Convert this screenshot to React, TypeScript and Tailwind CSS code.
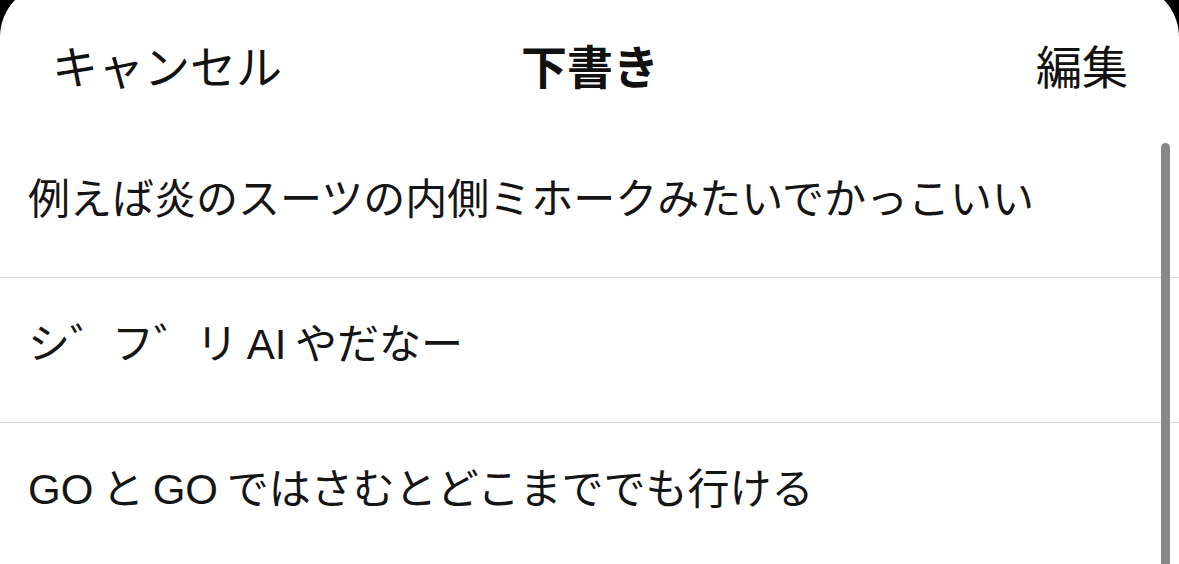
const DRAFTS = [
  "例えば炎のスーツの内側ミホークみたいでかっこいい",
  "シ゛フ゛リ AI やだなー",
  "GO と GO ではさむとどこまででも行ける",
];

const FONT = "font-['Liberation_Sans','Noto_Sans_CJK_JP',sans-serif]";

export default function App() {
  return (
    <div className={`w-[1179px] h-[564px] overflow-hidden bg-black ${FONT}`}>
      <div className="relative -mt-4 h-[580px] bg-white rounded-t-[53px] pt-4">
        <header className="h-[133px] flex items-center pl-[52px] pr-[51px] pt-[4px] text-[46px] text-[#111]">
          <div className="flex-1">キャンセル</div>
          <div className="font-bold">下書き</div>
          <div className="flex-1 text-right">編集</div>
        </header>

        <ul className="relative">
          {DRAFTS.map((text, i) => (
            <li
              key={i}
              className="h-[145px] flex items-center px-[28px] pb-3 border-b border-[#d6d6d6] text-[42px] text-[#151515] whitespace-nowrap [word-spacing:-3px]"
            >
              {text}
            </li>
          ))}
          <div className="absolute left-[1161px] top-[10px] w-[9px] h-[500px] rounded-full bg-[#888888]" />
        </ul>
      </div>
    </div>
  );
}
